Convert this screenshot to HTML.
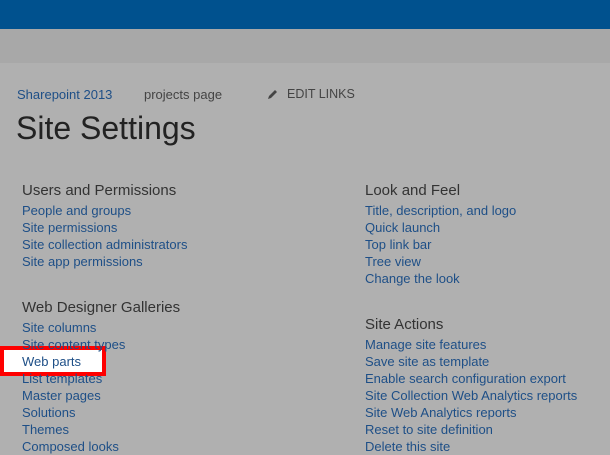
<!DOCTYPE html><html><head><style>
body{margin:0;width:610px;height:454px;overflow:hidden;background:#b0b0b0;font-family:"Liberation Sans",sans-serif;position:relative}
.top{position:absolute;left:0;top:0;width:610px;height:29px;background:#00518e}
.bar{position:absolute;left:0;top:29px;width:610px;height:34px;background:#a8a8a8}
.t{position:absolute;white-space:nowrap}
.l{color:#1e4f87;font-size:13px}
.h{color:#333;font-size:15px}
.box{position:absolute;left:0;top:346px;width:98px;height:22px;border:4px solid #f00;background:#fff}
</style></head><body>
<div class="top"></div><div class="bar"></div>
<div class="t l" style="left:17px;top:87px">Sharepoint 2013</div>
<div class="t" style="left:144px;top:87px;font-size:13px;color:#444">projects page</div>
<svg class="t" style="left:267px;top:88px" width="12" height="12" viewBox="0 0 12 12"><path d="M1 11 L2 8 L8 2 L10 4 L4 10 Z" fill="#444"/></svg>
<div class="t" style="left:287px;top:87px;font-size:12.5px;color:#444">EDIT LINKS</div>
<div class="t" style="left:16px;top:110px;font-size:32px;color:#222;font-weight:300">Site Settings</div>
<div class="box"></div>
<div class="t h" style="left:22px;top:182px">Users and Permissions</div>
<div class="t l" style="left:22px;top:202px;line-height:17px">People and groups<br>Site permissions<br>Site collection administrators<br>Site app permissions</div>
<div class="t h" style="left:22px;top:299px">Web Designer Galleries</div>
<div class="t l" style="left:22px;top:319px;line-height:17px">Site columns<br>Site content types<br>Web parts<br>List templates<br>Master pages<br>Solutions<br>Themes<br>Composed looks</div>
<div class="t h" style="left:365px;top:182px">Look and Feel</div>
<div class="t l" style="left:365px;top:202px;line-height:17px">Title, description, and logo<br>Quick launch<br>Top link bar<br>Tree view<br>Change the look</div>
<div class="t h" style="left:365px;top:316px">Site Actions</div>
<div class="t l" style="left:365px;top:336px;line-height:17px">Manage site features<br>Save site as template<br>Enable search configuration export<br>Site Collection Web Analytics reports<br>Site Web Analytics reports<br>Reset to site definition<br>Delete this site</div>
</body></html>
